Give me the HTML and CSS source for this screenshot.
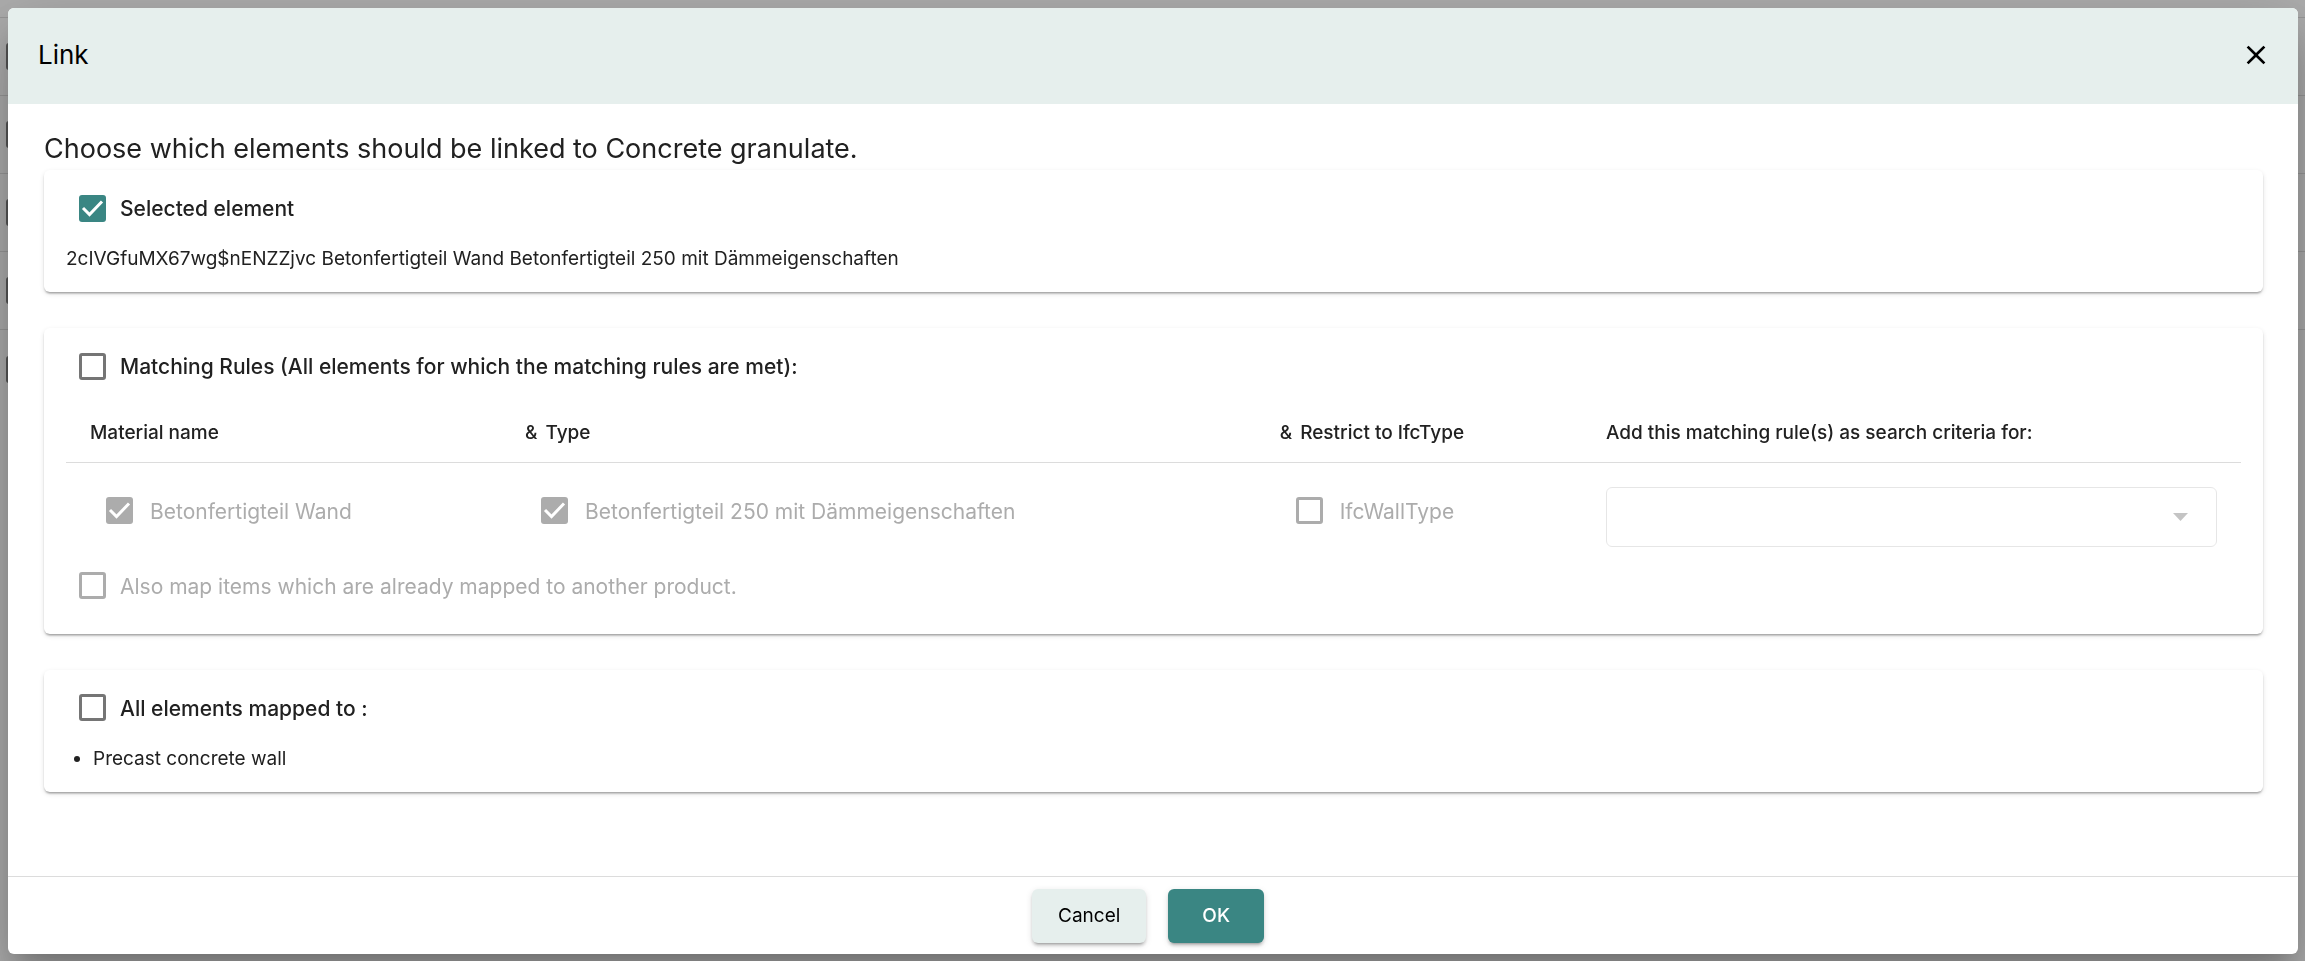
FILE: index.html
```html
<!DOCTYPE html>
<html lang="en">
<head>
    <meta charset="UTF-8">
    <meta name="viewport" content="width=device-width, initial-scale=1.0">
    <title>Link</title>
    <link rel="stylesheet" href="styles.css">
</head>
<body>
    <!-- list behind the dialog -->
    <div class="page" aria-hidden="true">
        <div class="page-row page-head"></div>
        <div class="page-row"><span class="page-box"></span></div>
        <div class="page-row"><span class="page-box"></span></div>
        <div class="page-row"><span class="page-box"></span></div>
        <div class="page-row"><span class="page-box"></span></div>
        <div class="page-row"><span class="page-box"></span></div>
    </div>

    <div class="dialog" role="dialog" aria-labelledby="dialog-title">
        <header class="dialog-header">
            <h1 id="dialog-title">Link</h1>
            <button type="button" class="close" aria-label="Close">
                <svg width="32" height="32" viewBox="0 0 24 24"><path d="M19 6.41L17.59 5 12 10.59 6.41 5 5 6.41 10.59 12 5 17.59 6.41 19 12 13.41 17.59 19 19 17.59 13.41 12z"/></svg>
            </button>
        </header>

        <main class="dialog-content">
            <h2>Choose which elements should be linked to Concrete granulate.</h2>

            <section class="card">
                <div class="check title">
                    <input type="checkbox" id="selected" checked>
                    <label for="selected">Selected element</label>
                </div>
                <p>2cIVGfuMX67wg$nENZZjvc Betonfertigteil Wand Betonfertigteil 250 mit Dämmeigenschaften</p>
            </section>

            <section class="card">
                <div class="check title">
                    <input type="checkbox" id="matching">
                    <label for="matching">Matching Rules (All elements for which the matching rules are met):</label>
                </div>
                <table class="rules">
                    <thead>
                        <tr>
                            <th class="col-material">Material name</th>
                            <th class="col-type"><span class="and">&amp;</span>Type</th>
                            <th class="col-ifc"><span class="and">&amp;</span>Restrict to IfcType</th>
                            <th class="col-criteria"><label for="criteria">Add this matching rule(s) as search criteria for:</label></th>
                        </tr>
                    </thead>
                    <tbody>
                        <tr>
                            <td>
                                <div class="check">
                                    <input type="checkbox" id="material" checked disabled>
                                    <label for="material">Betonfertigteil Wand</label>
                                </div>
                            </td>
                            <td>
                                <div class="check">
                                    <input type="checkbox" id="type" checked disabled>
                                    <label for="type">Betonfertigteil 250 mit Dämmeigenschaften</label>
                                </div>
                            </td>
                            <td>
                                <div class="check">
                                    <input type="checkbox" id="ifctype" disabled>
                                    <label for="ifctype">IfcWallType</label>
                                </div>
                            </td>
                            <td>
                                <select id="criteria" disabled>
                                    <option></option>
                                </select>
                            </td>
                        </tr>
                    </tbody>
                </table>
                <div class="check remap">
                    <input type="checkbox" id="remap" disabled>
                    <label for="remap">Also map items which are already mapped to another product.</label>
                </div>
            </section>

            <section class="card">
                <div class="check title">
                    <input type="checkbox" id="mapped">
                    <label for="mapped">All elements mapped to :</label>
                </div>
                <ul>
                    <li>Precast concrete wall</li>
                </ul>
            </section>
        </main>

        <footer class="dialog-actions">
            <button type="button" class="btn">Cancel</button>
            <button type="button" class="btn primary">OK</button>
        </footer>
    </div>
</body>
</html>
```
FILE: styles.css
```css
* {
    box-sizing: border-box;
}
body {
    margin: 0;
    min-height: 100vh;
    background: #adadad;
    color: #212121;
    font-family: Inter, sans-serif;
    font-size: 19px;
    line-height: 30px;
}
h1, h2, p, ul {
    margin: 0;
}

/* page behind the dialog */
.page-row {
    display: flex;
    align-items: center;
    height: 78px;
    padding-left: 6px;
    border-bottom: 1px solid #989898;
}
.page-row:last-child {
    border-bottom: 0;
}
.page-head {
    height: 18px;
}
.page-box {
    width: 27px;
    height: 27px;
    border: 3px solid #555;
    border-radius: 3px;
}

.dialog {
    position: fixed;
    inset: 8px 7px 7px 8px;
    display: flex;
    flex-direction: column;
    overflow: hidden;
    background: #fff;
    border-radius: 6px;
    box-shadow: 0 16px 22px -10px rgba(0, 0, 0, 0.2),
        0 36px 57px 4px rgba(0, 0, 0, 0.14),
        0 14px 69px 12px rgba(0, 0, 0, 0.12);
}
.dialog-header {
    display: flex;
    align-items: center;
    justify-content: space-between;
    height: 96px;
    padding: 0 26px 2px 30px;
    background: #e6efed;
    color: #000;
}
h1 {
    font-size: 26px;
    font-weight: 400;
}
.close {
    display: flex;
    padding: 0;
    border: 0;
    background: none;
    cursor: pointer;
}
.dialog-content {
    flex: 1;
    padding: 25px 35px 0 36px;
    overflow: auto;
}
h2 {
    padding-bottom: 1px;
    font-size: 27px;
    font-weight: 400;
    line-height: 40px;
}

.card {
    margin-bottom: 36px;
    padding: 22px 22px 18px;
    border-radius: 6px;
    box-shadow: 0 3px 2px -2px rgba(0, 0, 0, 0.2),
        0 2px 2px rgba(0, 0, 0, 0.14),
        0 2px 5px rgba(0, 0, 0, 0.12);
}
.check {
    display: flex;
    align-items: center;
    gap: 14px;
    padding-left: 13px;
    font-size: 21px;
}
.check label {
    padding-top: 2px;
}
.check.title {
    margin-bottom: 20px;
    font-weight: 500;
}
input[type="checkbox"] {
    appearance: none;
    width: 27px;
    height: 27px;
    margin: 0;
    border: 3px solid #757575;
    border-radius: 3px;
}
input[type="checkbox"]:checked {
    border: 0;
    background: #3a8683 url("data:image/svg+xml,%3Csvg xmlns='http://www.w3.org/2000/svg' viewBox='0 0 27 27'%3E%3Cpath d='M4 13l6.500 6.500L23 6.500' fill='none' stroke='white' stroke-width='3'/%3E%3C/svg%3E");
}
input[type="checkbox"]:disabled {
    border-color: #acacac;
}
input[type="checkbox"]:checked:disabled {
    background-color: #acacac;
}
input:disabled + label {
    color: #acacac;
}

.rules {
    width: 100%;
    table-layout: fixed;
    border-collapse: collapse;
}
.rules th {
    height: 60px;
    padding: 2px 24px 0;
    border-bottom: 1px solid #dcdcdc;
    font-weight: 500;
    text-align: left;
}
.rules td {
    padding: 24px 24px 23px;
    vertical-align: top;
}
.rules .check {
    gap: 17px;
    padding: 8px 0 0 16px;
}
.and {
    margin-right: 8px;
}
.col-material {
    width: 20%;
}
.col-type {
    width: 34.7%;
}
.col-ifc {
    width: 15%;
}
.col-criteria {
    width: 30.3%;
}
select {
    display: block;
    width: 100%;
    height: 60px;
    padding: 0 24px;
    appearance: none;
    border: 1px solid #dcdcdc;
    border-radius: 6px;
    background: #fff url("data:image/svg+xml,%3Csvg xmlns='http://www.w3.org/2000/svg' viewBox='0 0 15 8'%3E%3Cpath d='M0 0h15L7.500 8z' fill='%23acacac'/%3E%3C/svg%3E") no-repeat right 28px center / 15px 8px;
    font: inherit;
}
.remap {
    padding-bottom: 14px;
}
ul {
    padding-left: 27px;
}

.dialog-actions {
    display: flex;
    align-items: center;
    justify-content: center;
    gap: 22px;
    height: 78px;
    padding-right: 10px;
    border-top: 1px solid #dcdcdc;
}
.btn {
    height: 54px;
    padding: 0 26px;
    border: 0;
    border-radius: 6px;
    background: #e6efed;
    color: #000;
    font-family: inherit;
    font-size: 19px;
    font-weight: 400;
    box-shadow: 0 4px 2px -3px rgba(0, 0, 0, 0.2),
        0 3px 3px rgba(0, 0, 0, 0.14),
        0 2px 7px rgba(0, 0, 0, 0.12);
    cursor: pointer;
}
.btn.primary {
    padding: 0 34px;
    background: #3a8683;
    color: #fff;
    font-weight: 500;
}
```
